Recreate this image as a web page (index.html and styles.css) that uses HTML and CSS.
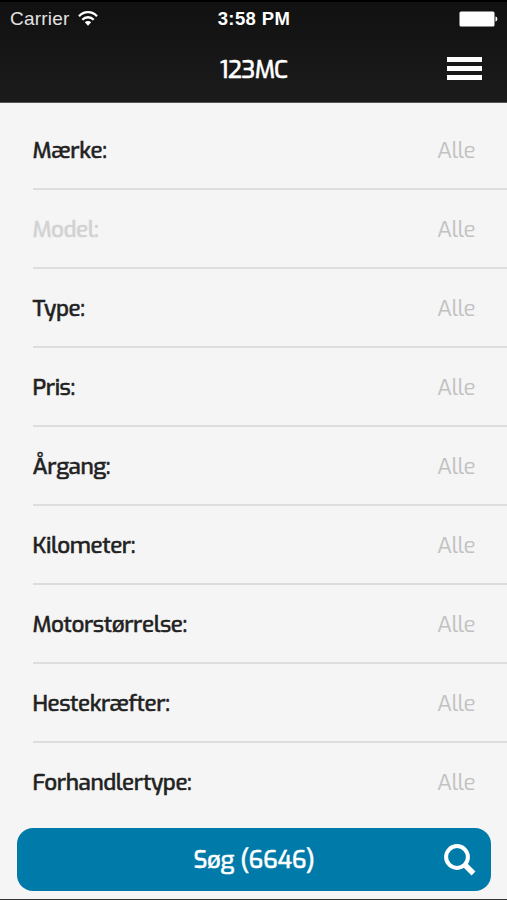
FILE: index.html
```html
<!DOCTYPE html>
<html lang="da">
<head>
<meta charset="utf-8">
<title>123MC</title>
<link rel="stylesheet" href="styles.css">
</head>
<body>
<div class="app">
  <header class="top">
    <div class="status">
      <div class="carrier"><span>Carrier</span>
        <svg class="wifi" width="20" height="16" viewBox="0 0 20 16" fill="none" stroke="#fff" stroke-width="2.3"><path d="M1 5.200C6-.2 14-.2 19 5.200M4.300 8.700c3.200-3.300 8.200-3.300 11.400 0"/><path d="M6.800 11.300c1.800-1.800 4.600-1.800 6.400 0L10 14.700z" fill="#fff" stroke="none"/></svg>
      </div>
      <div class="time">3:58 PM</div>
      <svg class="battery" width="39" height="16" viewBox="0 0 39 16" fill="#fff"><rect x=".5" y=".5" width="35" height="15" rx="1.500"/><path d="M36.500 5.500c2.500.4 2.500 4.600 0 5z"/></svg>
    </div>
    <div class="nav">
      <h1 class="title">123MC</h1>
      <div class="menu"><i></i><i></i><i></i></div>
    </div>
  </header>
  <main class="list">
    <div class="row"><span class="label">Mærke:</span><span class="value">Alle</span></div>
    <div class="row"><span class="label disabled">Model:</span><span class="value">Alle</span></div>
    <div class="row"><span class="label">Type:</span><span class="value">Alle</span></div>
    <div class="row"><span class="label">Pris:</span><span class="value">Alle</span></div>
    <div class="row"><span class="label">Årgang:</span><span class="value">Alle</span></div>
    <div class="row"><span class="label">Kilometer:</span><span class="value">Alle</span></div>
    <div class="row"><span class="label">Motorstørrelse:</span><span class="value">Alle</span></div>
    <div class="row"><span class="label">Hestekræfter:</span><span class="value">Alle</span></div>
    <div class="row"><span class="label">Forhandlertype:</span><span class="value">Alle</span></div>
  </main>
  <div class="search">
    <span class="search-text">Søg (6646)</span>
    <svg class="lens" width="34" height="34" viewBox="0 0 34 34" fill="none" stroke="#fff"><circle cx="14" cy="14" r="10.900" stroke-width="4"/><path d="M21.500 21.500l9 9" stroke-width="5.500"/></svg>
  </div>
</div>
</body>
</html>
```
FILE: styles.css
```css
* { box-sizing: border-box; }
body { margin: 0; background: #f5f5f5; font-family: Exo, "Exo 2", Roboto, "Liberation Sans", sans-serif; }
.app { height: 900px; display: flex; flex-direction: column; border-bottom: 1px solid #333; overflow: hidden; }
.top { height: 103px; flex: none; background: linear-gradient(#111, #1b1b1b); border-top: 2px solid #000; border-bottom: 1px solid #555; color: #fff; }
.status { height: 33px; display: grid; grid-template-columns: 1fr auto 1fr; align-items: center; padding: 0 9px 0 10px; font-family: "Liberation Sans", sans-serif; }
.carrier { display: flex; align-items: center; gap: 9px; font-size: 19px; letter-spacing: .2px; color: #e2e2e2; }
.time { font-size: 18.500px; font-weight: bold; letter-spacing: .4px; }
.battery { justify-self: end; }
.nav { height: 66px; display: grid; grid-template-columns: 1fr auto 1fr; align-items: center; padding: 0 25px; }
.title { grid-column: 2; margin: 0; padding-top: 3px; font-size: 24px; font-weight: 500; letter-spacing: -.65px; -webkit-text-stroke: .4px; }
.menu { justify-self: end; display: grid; gap: 4px; width: 35px; }
.menu i { height: 5px; background: #fff; }
.list { flex: none; padding: 8px 0 0 33px; }
.row { height: 79px; display: flex; align-items: center; justify-content: space-between; padding: 0 32px 0 0; border-bottom: 2px solid #ddd; }
.row:last-child { border-bottom-color: transparent; }
.label { margin-left: -.5px; font-size: 22.500px; font-weight: 500; letter-spacing: -.45px; color: #222; -webkit-text-stroke: .45px; }
.disabled { color: #d2d2d2; }
.value { font-size: 22.500px; font-weight: 400; letter-spacing: -.6px; color: #c2c2c2; }
.search { height: 63px; flex: none; margin: 6px 16px 0 17px; padding: 0 14px; border-radius: 16px; background: #007aa8; color: #fff; display: grid; grid-template-columns: 1fr auto 1fr; align-items: center; }
.search-text { grid-column: 2; font-size: 24px; font-weight: 500; letter-spacing: -.3px; -webkit-text-stroke: .4px; }
.lens { justify-self: end; }
```
